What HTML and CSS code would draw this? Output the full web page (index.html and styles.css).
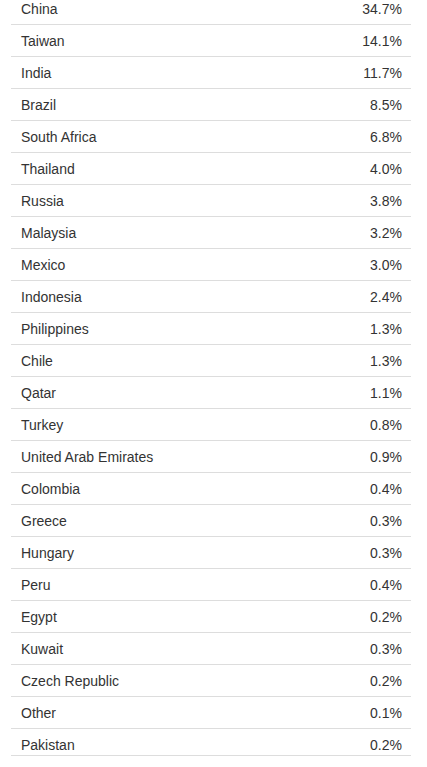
FILE: index.html
```html
<!DOCTYPE html>
<html>
<head>
<meta charset="utf-8">
<link rel="stylesheet" href="styles.css">
</head>
<body>
<table class="tbl">
<tbody>
<tr><td>China</td><td class="num">34.7%</td></tr>
<tr><td>Taiwan</td><td class="num">14.1%</td></tr>
<tr><td>India</td><td class="num">11.7%</td></tr>
<tr><td>Brazil</td><td class="num">8.5%</td></tr>
<tr><td>South Africa</td><td class="num">6.8%</td></tr>
<tr><td>Thailand</td><td class="num">4.0%</td></tr>
<tr><td>Russia</td><td class="num">3.8%</td></tr>
<tr><td>Malaysia</td><td class="num">3.2%</td></tr>
<tr><td>Mexico</td><td class="num">3.0%</td></tr>
<tr><td>Indonesia</td><td class="num">2.4%</td></tr>
<tr><td>Philippines</td><td class="num">1.3%</td></tr>
<tr><td>Chile</td><td class="num">1.3%</td></tr>
<tr><td>Qatar</td><td class="num">1.1%</td></tr>
<tr><td>Turkey</td><td class="num">0.8%</td></tr>
<tr><td>United Arab Emirates</td><td class="num">0.9%</td></tr>
<tr><td>Colombia</td><td class="num">0.4%</td></tr>
<tr><td>Greece</td><td class="num">0.3%</td></tr>
<tr><td>Hungary</td><td class="num">0.3%</td></tr>
<tr><td>Peru</td><td class="num">0.4%</td></tr>
<tr><td>Egypt</td><td class="num">0.2%</td></tr>
<tr><td>Kuwait</td><td class="num">0.3%</td></tr>
<tr><td>Czech Republic</td><td class="num">0.2%</td></tr>
<tr><td>Other</td><td class="num">0.1%</td></tr>
<tr class="last"><td>Pakistan</td><td class="num">0.2%</td></tr>
</tbody>
</table>
</body>
</html>
```
FILE: styles.css
```css
html, body {
  margin: 0;
  padding: 0;
  background: #fff;
}
body {
  font-family: "Liberation Sans", Arial, sans-serif;
  font-size: 14px;
  color: #333;
}
.tbl {
  width: 400px;
  margin: -7px 0 0 11px;
  border-collapse: collapse;
}
.tbl td {
  padding: 6px 10px 5px;
  line-height: 20px;
  height: 20px;
  border-bottom: 1px solid #ddd;
  vertical-align: middle;
}
.tbl td.num {
  text-align: right;
  padding-right: 9px;
}
.tbl tr.last td {
  padding-bottom: 0;
  height: 20px;
}
```
